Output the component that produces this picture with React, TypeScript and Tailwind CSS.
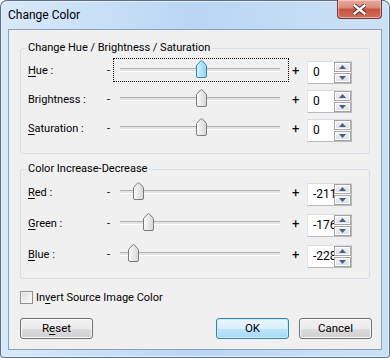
import React from "react";

type Row = { label: React.ReactNode; value: string; pos: number; focused?: boolean };

const HSB_ROWS: Row[] = [
  { label: <><u className="underline-offset-[2px]">H</u>ue :</>, value: "0", pos: 88, focused: true },
  { label: <>Brightness :</>, value: "0", pos: 88 },
  { label: <><u className="underline-offset-[2px]">S</u>aturation :</>, value: "0", pos: 88 },
];

const RGB_ROWS: Row[] = [
  { label: <><u className="underline-offset-[2px]">R</u>ed :</>, value: "-211", pos: 25 },
  { label: <><u className="underline-offset-[2px]">G</u>reen :</>, value: "-176", pos: 35 },
  { label: <><u className="underline-offset-[2px]">B</u>lue :</>, value: "-228", pos: 20 },
];

function Thumb({ hot }: { hot?: boolean }) {
  return (
    <svg width="11" height="18" viewBox="0 0 11 18">
      <defs>
        <linearGradient id={hot ? "thumbHot" : "thumbN"} x1="0" y1="0" x2="1" y2="0">
          <stop offset="0" stopColor={hot ? "#d5f2fd" : "#fbfbfb"} />
          <stop offset="1" stopColor={hot ? "#8dd6f3" : "#d6d6d6"} />
        </linearGradient>
      </defs>
      <path
        d="M0.5 5.5 L4.6 1 Q5.5 0.2 6.4 1 L10.5 5.5 V16 Q10.5 17.5 9 17.5 H2 Q0.5 17.5 0.5 16 Z"
        fill={`url(#${hot ? "thumbHot" : "thumbN"})`}
        stroke={hot ? "#3c7fb1" : "#7a7a7a"}
      />
    </svg>
  );
}

function Slider({ pos, focused }: { pos: number; focused?: boolean }) {
  return (
    <div
      className={`relative -mt-[3px] h-[24px] w-[176px] flex-none ${
        focused ? "border border-dotted border-black" : "border border-transparent"
      }`}
    >
      <div className="absolute left-[6px] right-[8px] top-[9px] h-[3px] border-t border-[#b0b0b0] bg-[#e4e4e4] shadow-[0_1px_0_#ffffff]" />
      <div className="absolute top-[1px]" style={{ left: pos - 6 }}>
        <Thumb hot={focused} />
      </div>
    </div>
  );
}

function SpinBtn({ up }: { up?: boolean }) {
  return (
    <div className="flex flex-1 items-center justify-center border border-[#a3a3a3] bg-gradient-to-b from-[#f3f3f3] to-[#dedede] shadow-[inset_0_0_0_1px_#ffffff]">
      <svg width="7" height="4" viewBox="0 0 7 4">
        <path d={up ? "M0 4 L3.5 0 L7 4 Z" : "M0 0 L3.5 4 L7 0 Z"} fill="#4a5e8c" />
      </svg>
    </div>
  );
}

function Spin({ value }: { value: string }) {
  return (
    <div className="flex h-[23px] w-[45px] flex-none border border-[#b9bbc2] border-t-[#dadce2] border-l-[#e3e5ea] bg-white">
      <div className="flex-1 overflow-hidden whitespace-nowrap pl-[5px] text-[12px] leading-[20px] text-black">
        {value}
      </div>
      <div className="flex w-[17px] flex-none flex-col gap-[1px]">
        <SpinBtn up />
        <SpinBtn />
      </div>
    </div>
  );
}

function SliderRow({ row }: { row: Row }) {
  return (
    <div className="flex h-[22px] items-start">
      <div className="w-[79px] flex-none leading-[20px]">{row.label}</div>
      <div className="w-[6px] flex-none leading-[20px]">-</div>
      <Slider pos={row.pos} focused={row.focused} />
      <div className="w-[18px] flex-none pl-[3px] text-[13px] leading-[20px]">+</div>
      <Spin value={row.value} />
    </div>
  );
}

function Group({ title, rows, gap, pt, pb }: { title: string; rows: Row[]; gap: string; pt: string; pb: string }) {
  return (
    <fieldset className={`mx-[11px] rounded-[3px] border border-[#d5dfe5] pl-[7px] ${pt} ${pb}`}>
      <legend className="-ml-[2px] px-[2px] leading-[16px]">{title}</legend>
      <div className={`flex flex-col ${gap}`}>
        {rows.map((r, i) => (
          <SliderRow key={i} row={r} />
        ))}
      </div>
    </fieldset>
  );
}

function Button({ children, primary }: { children: React.ReactNode; primary?: boolean }) {
  return (
    <button
      className={`h-[21px] w-[73px] rounded-[3px] border text-[11.5px] leading-[17px] text-black ${
        primary
          ? "border-[#3c7fb1] bg-[linear-gradient(#eaf6fd_0%,#d9f0fc_50%,#bee6fd_51%,#a7d9f5_100%)] shadow-[inset_0_0_0_1px_#c6ecfb]"
          : "border-[#707070] bg-[linear-gradient(#f2f2f2_0%,#ebebeb_50%,#dddddd_51%,#cfcfcf_100%)] shadow-[inset_0_0_0_1px_#fbfbfb]"
      }`}
    >
      {children}
    </button>
  );
}

export default function App() {
  return (
    <div className="flex h-[358px] w-[390px] flex-col rounded-t-[7px] rounded-b-[4px] bg-gradient-to-r from-[#d9e9f9] via-[#b9d6f4] to-[#cde1f5] px-[8px] pb-[8px] font-['Roboto','Segoe_UI',sans-serif] text-[11px] text-black shadow-[inset_0_0_0_1px_#5b6f86,inset_0_0_0_2px_#e5effa]">
      <div className="flex h-[29px] flex-none items-start justify-between">
        <div className="pt-[7px] text-[12px] leading-[16px] text-black">Change Color</div>
        <div className="flex h-[19px] w-[45px] items-center justify-center rounded-b-[4px] border border-t-0 border-[#6f3a35] bg-[linear-gradient(#e9a99c_0%,#d88a7c_45%,#c7503e_50%,#d1705a_100%)] shadow-[inset_0_0_0_1px_rgba(255,220,210,0.55)]">
          <svg width="13" height="11" viewBox="0 0 13 11">
            <path
              d="M1.5 1.5 L11.5 9.5 M11.5 1.5 L1.5 9.5"
              stroke="#4a2b2a"
              strokeWidth="4.2"
              strokeLinecap="square"
            />
            <path
              d="M1.5 1.5 L11.5 9.5 M11.5 1.5 L1.5 9.5"
              stroke="#ffffff"
              strokeWidth="2.4"
              strokeLinecap="square"
            />
          </svg>
        </div>
      </div>

      <div className="flex flex-1 flex-col border border-[#8ba1b8] bg-[#f0f0f0]">
        <div className="mt-[10px]">
          <Group title="Change Hue / Brightness / Saturation" rows={HSB_ROWS} gap="gap-[7px]" pt="pt-[5px]" pb="pb-[12px]" />
        </div>
        <div className="mt-[7px]">
          <Group title="Color Increase-Decrease" rows={RGB_ROWS} gap="gap-[9px]" pt="pt-[6px]" pb="pb-[11px]" />
        </div>

        <div className="ml-[11px] mt-[12px] flex h-[13px] items-center gap-[3px]">
          <div className="h-[13px] w-[13px] border border-[#8e8f8f] bg-gradient-to-br from-[#dcdcdc] to-[#fbfbfb] shadow-[inset_0_0_0_1px_#f4f4f4]" />
          <span className="leading-[16px]">
            In<u className="underline-offset-[2px]">v</u>ert Source Image Color
          </span>
        </div>

        <div className="ml-[11px] mr-[9px] mt-[14px] flex items-center gap-[10px]">
          <Button>
            R<u className="underline-offset-[2px]">e</u>set
          </Button>
          <div className="flex-1" />
          <Button primary>OK</Button>
          <Button>Cancel</Button>
        </div>
      </div>
    </div>
  );
}
